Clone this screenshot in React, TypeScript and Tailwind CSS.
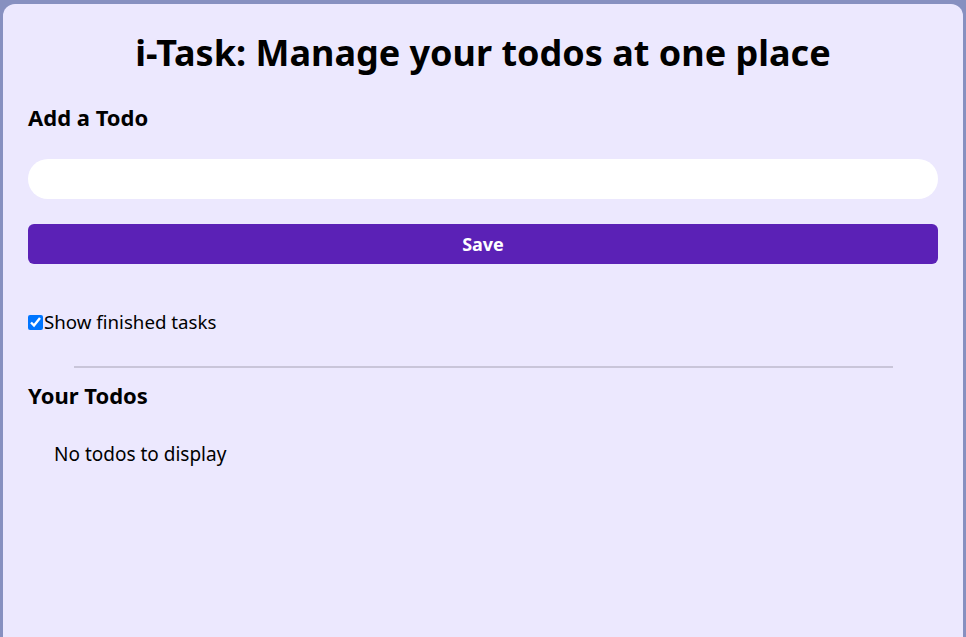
import { useState } from 'react';

export default function App() {
  const [todo, setTodo] = useState('');
  const [showFinished, setShowFinished] = useState(true);

  return (
    <div className="h-screen bg-[#8790c0] pt-[4px] px-[3px] overflow-hidden" style={{ fontFamily: '"Noto Sans", "Open Sans", sans-serif' }}>
      <div className="h-[calc(100vh+12px)] rounded-xl bg-[#ece8fe] px-[25px] text-black">
        {/* Header */}
        <h1 className="pt-[27px] text-center text-[36px] font-bold leading-[44px]">
          i-Task: Manage your todos at one place
        </h1>

        {/* Add todo */}
        <div className="mt-[27px] flex flex-col">
          <h2 className="text-[22px] font-bold leading-[30px]">Add a Todo</h2>
          <input
            type="text"
            value={todo}
            onChange={(e) => setTodo(e.target.value)}
            className="mt-[27px] h-[40px] w-full rounded-full bg-white px-5 text-lg outline-none"
          />
          <button className="mt-[25px] h-[40px] w-full rounded-md bg-[#5b21b6] text-[18px] font-bold text-white">
            Save
          </button>
        </div>

        {/* Filter */}
        <label className="mt-[46px] flex items-center text-[18.7px] leading-[24px]">
          <input
            type="checkbox"
            checked={showFinished}
            onChange={() => setShowFinished(!showFinished)}
            className="m-0 h-[15px] w-[15px] accent-[#0075ff]"
          />
          <span className="ml-[1px]">Show finished tasks</span>
        </label>

        <hr className="mx-auto mt-[32px] w-[90%] border-t-2 border-[#c9c5d9]" />

        {/* Todo list */}
        <h2 className="mt-[12px] text-[22px] font-bold leading-[30px]">Your Todos</h2>
        <div className="mt-[32px] ml-[26px] text-[19px] leading-[24px]">No todos to display</div>
      </div>
    </div>
  );
}
